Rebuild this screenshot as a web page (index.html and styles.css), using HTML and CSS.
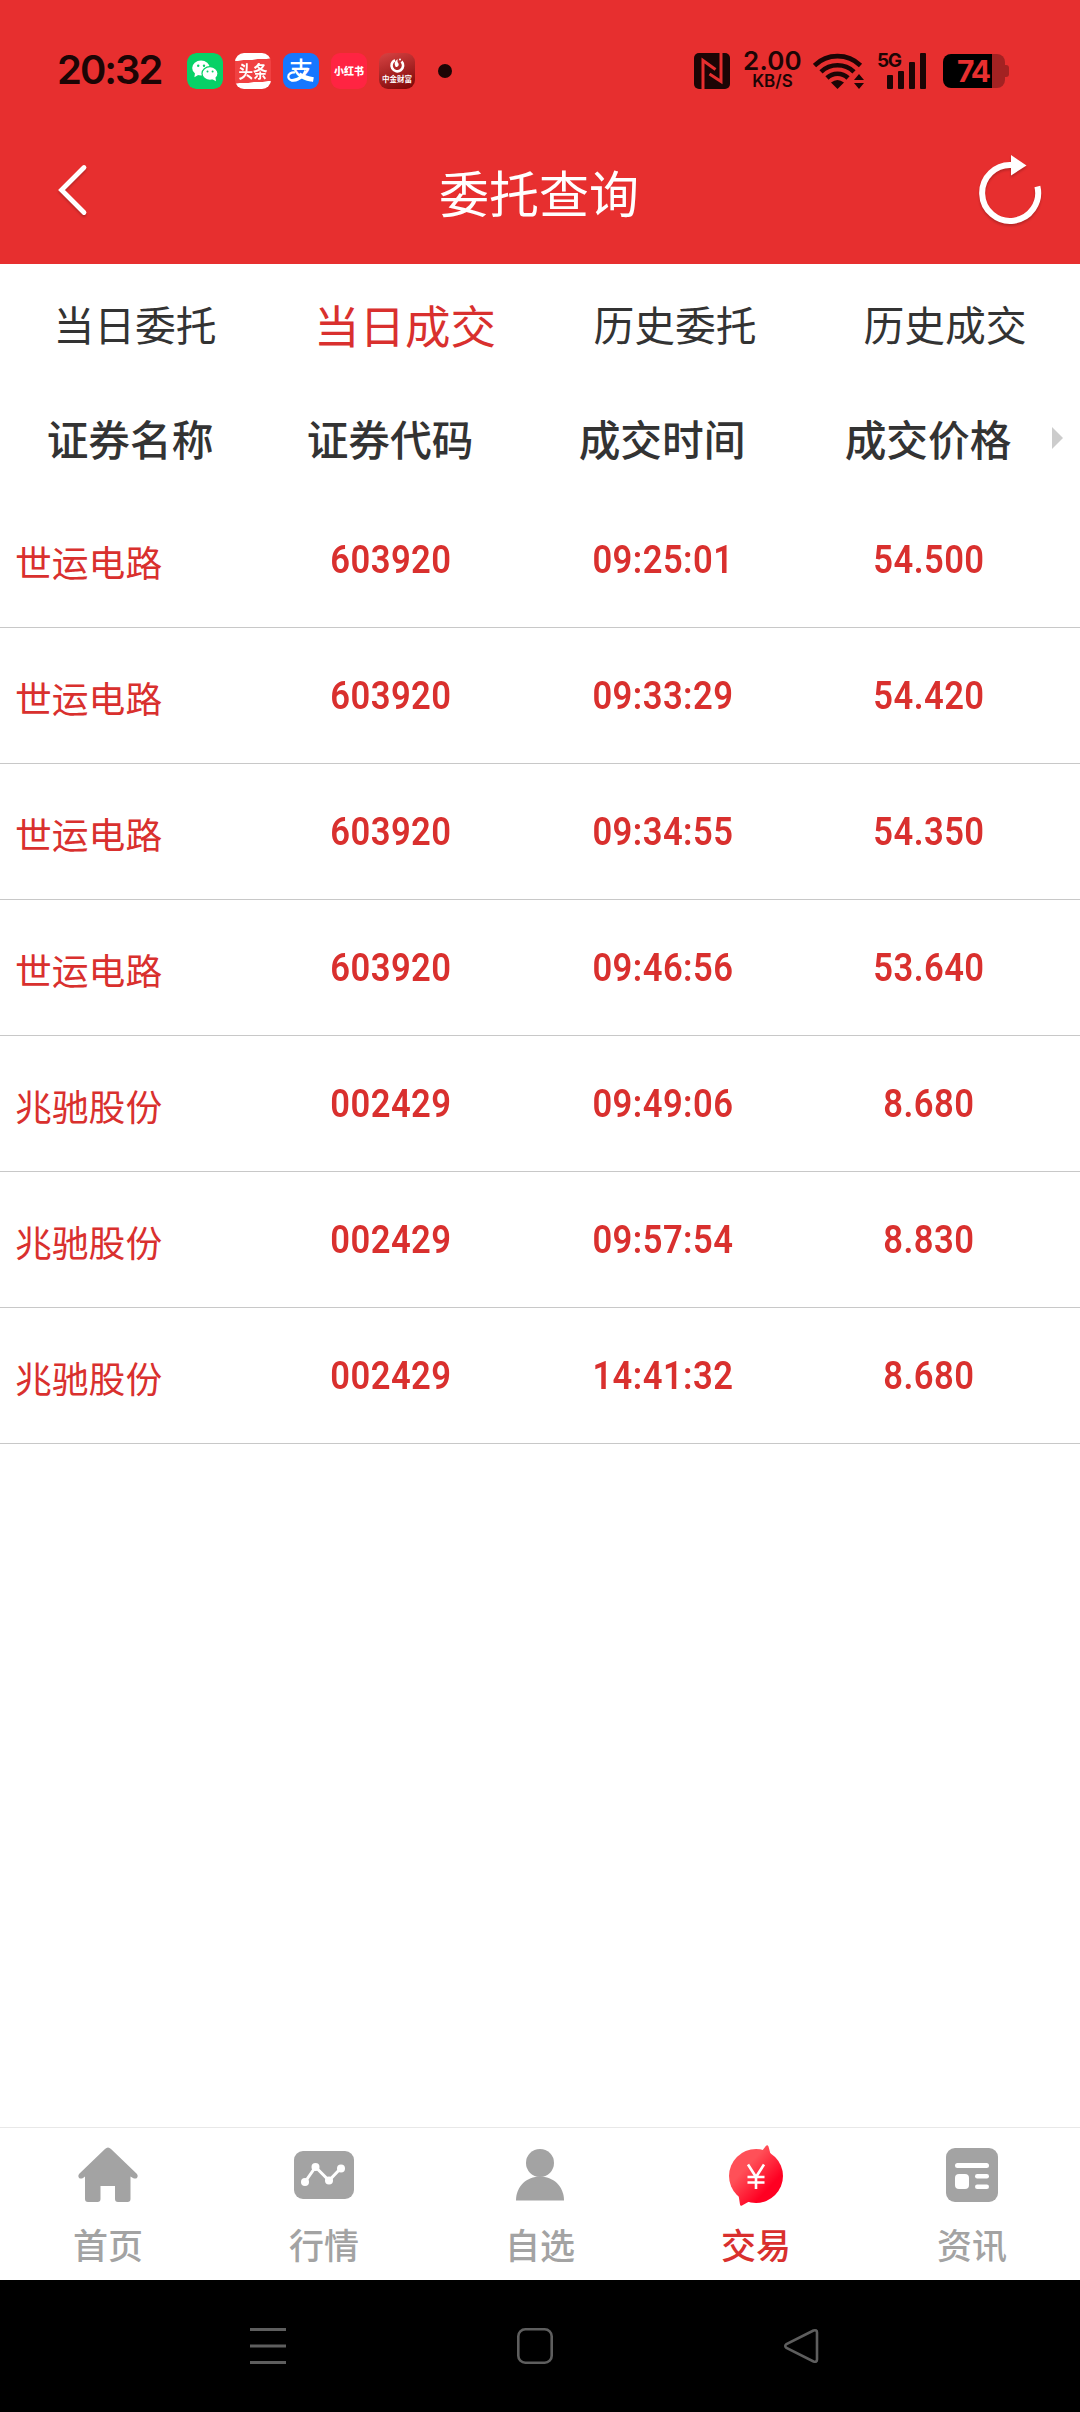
FILE: index.html
```html
<!DOCTYPE html>
<html lang="zh-CN">
<head>
    <meta charset="UTF-8">
    <meta name="viewport" content="width=device-width, initial-scale=1.0">
    <title>委托查询</title>
    <link rel="stylesheet" href="styles.css">
</head>
<body>
    <div class="status-bar">
        <div class="clock">20:32</div>
        <div class="app-icons">
            <svg class="app-icon" viewBox="0 0 36 36">
                <rect width="36" height="36" rx="9" fill="#07d167"/>
                <ellipse cx="14" cy="15" rx="8.8" ry="7.4" fill="#fff"/>
                <path d="M8 20l-.6 4.2 4.2-2.4z" fill="#fff"/>
                <ellipse cx="23" cy="20.5" rx="8" ry="6.8" fill="#fff" stroke="#07d167" stroke-width="1.2"/>
                <path d="M25 26l4 2.2-.6-4z" fill="#fff"/>
                <g fill="#07d167">
                    <circle cx="11.2" cy="12.8" r="1.2"/>
                    <circle cx="17" cy="12.8" r="1.2"/>
                    <circle cx="20.5" cy="18.6" r="1"/>
                    <circle cx="25.6" cy="18.6" r="1"/>
                </g>
            </svg>
            <div class="app-icon app-toutiao"><span>头条</span></div>
            <div class="app-icon app-alipay"><span>支</span>
                <svg viewBox="0 0 36 36"><path d="M12 19.5c-4-.3-7 1.5-6.7 4.5.4 3.6 5.7 4.6 9.7 2.5 3.5-1.8 6-5 7.5-9" fill="none" stroke="#fff" stroke-width="2.2"/><path d="M17 19.5c4.5 2.4 8.5 3.9 13.8 4.8l-.8 4.6c-5-1.3-9-3.6-14-7z" fill="#fff"/></svg>
            </div>
            <div class="app-icon app-xhs"><span>小红书</span></div>
            <div class="app-icon app-cicc">
                <svg viewBox="0 0 36 22"><path d="M16 7.2A5.8 5.8 0 1 0 22.5 8.5" fill="none" stroke="#fff" stroke-width="2.6"/><path d="M18.5 6c-3 2.600-3.600 5-1.800 8 3 .2 4-2.600 1.800-5z" fill="#fff"/><circle cx="21" cy="6.5" r="1" fill="#fff"/></svg>
                <span>中金财富</span>
            </div>
        </div>
        <div class="more-dot"></div>
        <div class="status-right">
            <svg class="nfc" viewBox="0 0 36 36">
                <rect width="36" height="36" rx="5" fill="#1c0505"/>
                <path d="M9 36V7.5L21.500 16.500M27 0v28.500L15.500 21" fill="none" stroke="#e72f2f" stroke-width="3"/>
            </svg>
            <div class="net-speed">
                <span class="speed-num">2.00</span>
                <span class="speed-unit">KB/S</span>
            </div>
            <svg class="wifi" viewBox="0 0 52 36">
                <g fill="none" stroke="#1c0505" stroke-width="4.6">
                    <path d="M1.5 12.5a33 33 0 0 1 46 0"/>
                    <path d="M8 18.8a24 24 0 0 1 33 0"/>
                    <path d="M14 25a15 15 0 0 1 21 0"/>
                </g>
                <path d="M18 29.5q6.5-5 13 0l-6.5 6.5z" fill="#1c0505"/>
                <path d="M41 27l5-6 5 6zM41 30h10l-5 6z" fill="#1c0505"/>
            </svg>
            <div class="signal">
                <span>5G</span>
                <svg viewBox="0 0 50 36" fill="#1c0505">
                    <rect x="10" y="22" width="6" height="14" rx="1"/>
                    <rect x="21" y="18" width="6" height="18" rx="1"/>
                    <rect x="32" y="9" width="6" height="27" rx="1"/>
                    <rect x="43" y="0" width="6" height="36" rx="1"/>
                </svg>
            </div>
            <div class="battery"><div class="battery-body">74</div><div class="battery-cap"></div></div>
        </div>
    </div>

    <header class="title-bar">
        <svg class="back-icon" viewBox="0 0 30 50"><path d="M27 2.5L4.500 25 27 47.500" fill="none" stroke="#fff" stroke-width="4.8" stroke-linecap="round"/></svg>
        <h1>委托查询</h1>
        <svg class="refresh-icon" viewBox="0 0 64 70">
            <path d="M33 8A28 28 0 1 0 58.4 29.5" fill="none" stroke="#fff" stroke-width="6"/>
            <path d="M32-2l15.5 10.5L32 18.5z" fill="#fff"/>
        </svg>
    </header>

    <nav class="tabs">
        <a class="tab">当日委托</a>
        <a class="tab active">当日成交</a>
        <a class="tab">历史委托</a>
        <a class="tab">历史成交</a>
    </nav>

    <main class="deals">
        <div class="deal-head">
            <span>证券名称</span>
            <span>证券代码</span>
            <span>成交时间</span>
            <span>成交价格</span>
            <i class="scroll-arrow"></i>
        </div>
        <div class="deal-row">
            <span class="name">世运电路</span><span class="num">603920</span><span class="num">09:25:01</span><span class="num">54.500</span>
        </div>
        <div class="deal-row">
            <span class="name">世运电路</span><span class="num">603920</span><span class="num">09:33:29</span><span class="num">54.420</span>
        </div>
        <div class="deal-row">
            <span class="name">世运电路</span><span class="num">603920</span><span class="num">09:34:55</span><span class="num">54.350</span>
        </div>
        <div class="deal-row">
            <span class="name">世运电路</span><span class="num">603920</span><span class="num">09:46:56</span><span class="num">53.640</span>
        </div>
        <div class="deal-row">
            <span class="name">兆驰股份</span><span class="num">002429</span><span class="num">09:49:06</span><span class="num">8.680</span>
        </div>
        <div class="deal-row">
            <span class="name">兆驰股份</span><span class="num">002429</span><span class="num">09:57:54</span><span class="num">8.830</span>
        </div>
        <div class="deal-row">
            <span class="name">兆驰股份</span><span class="num">002429</span><span class="num">14:41:32</span><span class="num">8.680</span>
        </div>
    </main>

    <nav class="bottom-nav">
        <a class="nav-item">
            <svg viewBox="0 0 60 60" fill="#a3a3a3"><path d="M27 4q3-3 6 0l26 25q1.500 2 0 4-2 1-4 0l-2.500-1.500V54q0 3-3 3H40q-3 0-3-3V41H22.500v13q0 3-3 3H10q-3 0-3-3V31.500L5 33q-2 1-4 0-1.500-2 0-4z"/></svg>
            <span>首页</span>
        </a>
        <a class="nav-item">
            <svg viewBox="0 0 60 60"><rect y="6" width="60" height="48" rx="9" fill="#a3a3a3"/><path d="M11 37L21.5 22 35 35.5 47 23" fill="none" stroke="#fff" stroke-width="3"/><g fill="#fff"><circle cx="11" cy="37" r="4"/><circle cx="21.5" cy="22" r="4"/><circle cx="35" cy="35.5" r="4"/><circle cx="47" cy="23.5" r="4"/></g></svg>
            <span>行情</span>
        </a>
        <a class="nav-item">
            <svg viewBox="0 0 60 60" fill="#a3a3a3"><circle cx="30" cy="18" r="14"/><path d="M6 55.5C6 41 17 31.5 30 31.5S54 41 54 55.5z"/></svg>
            <span>自选</span>
        </a>
        <a class="nav-item active">
            <svg viewBox="0 0 60 60">
                <defs><linearGradient id="trade" gradientUnits="userSpaceOnUse" x1="14" y1="16" x2="46" y2="46"><stop offset="0.2" stop-color="#ff5058"/><stop offset="0.9" stop-color="#ff0022"/></linearGradient></defs>
                <g fill="url(#trade)">
                    <circle cx="30" cy="31" r="27"/>
                    <path d="M36 6L40 .8Q41.5-.8 42.5 1.5L44.5 9zM24 56L16 60.5Q14.5 61.5 14 59.5L12.5 50z"/>
                </g>
                <path d="M22 19.5l8 12.5 8-12.5M30 31v13M21.5 32h17M21.5 37.5h17" fill="none" stroke="#fff" stroke-width="2.6"/>
            </svg>
            <span>交易</span>
        </a>
        <a class="nav-item">
            <svg viewBox="0 0 60 60"><rect x="4" y="3" width="52" height="54" rx="9" fill="#a3a3a3"/><g fill="#fff"><rect x="13" y="18" width="34" height="5" rx="2.5"/><rect x="13" y="29" width="14" height="15" rx="4"/><rect x="33" y="29" width="14" height="4.5" rx="2.2"/><rect x="33" y="39.5" width="14" height="4.5" rx="2.2"/></g></svg>
            <span>资讯</span>
        </a>
    </nav>

    <div class="system-nav">
        <svg viewBox="0 0 36 36"><path d="M0 1.5h36M0 18h36M0 34.5h36" stroke="#5e5e5e" stroke-width="3"/></svg>
        <svg viewBox="0 0 36 36"><rect x="1.3" y="1.3" width="33.4" height="33.4" rx="7" fill="none" stroke="#5e5e5e" stroke-width="2.6"/></svg>
        <svg viewBox="0 0 36 36"><path d="M30.5 2.5L3.5 16Q1 18 3.5 20l27 13.5q3.500 1 3.500-2V4.500q0-3-3.500-2z" fill="none" stroke="#5e5e5e" stroke-width="2.6"/></svg>
    </div>
</body>
</html>
```
FILE: styles.css
```css
* {
    margin: 0;
    padding: 0;
    box-sizing: border-box;
}

body {
    width: 1080px;
    height: 2412px;
    display: flex;
    flex-direction: column;
    font-family: "Noto Sans CJK SC", sans-serif;
    background: #fff;
    color: #333;
    overflow: hidden;
}

svg {
    display: block;
}

/* phone status bar */
.status-bar {
    height: 142px;
    padding: 0 71px 0 57px;
    display: flex;
    align-items: center;
    background: #e72f2f;
    color: #1c0505;
    font-family: Inter, sans-serif;
}

.clock {
    width: 130px;
    padding-bottom: 2px;
    font-size: 40px;
    font-weight: 600;
    line-height: 36px;
    letter-spacing: -2px;
}

.app-icons {
    display: flex;
    gap: 12px;
}

.app-icon {
    width: 36px;
    height: 36px;
    border-radius: 9px;
    color: #fff;
    font-family: "Noto Sans CJK SC", sans-serif;
    font-weight: 700;
    text-align: center;
    white-space: nowrap;
}

.app-toutiao {
    background: linear-gradient(176deg, #fff 20%, #f04142 21%, #f04142 79%, #fff 80%);
    font-size: 14.5px;
    line-height: 36px;
}

.app-toutiao span {
    display: block;
    transform: scaleY(1.15);
}

.app-alipay {
    position: relative;
    background: #1677ff;
    font-size: 24px;
    font-weight: 500;
    line-height: 32px;
}

.app-alipay svg {
    position: absolute;
    top: 0;
    left: 0;
}

.app-xhs {
    background: #ff2442;
    font-size: 10px;
    font-weight: 900;
    line-height: 36px;
}

.app-cicc {
    background: linear-gradient(160deg, #d84343, #7a0505);
    font-size: 7.5px;
    line-height: 8px;
}

.more-dot {
    width: 14px;
    height: 14px;
    margin-left: 23px;
    border-radius: 50%;
    background: #1c0505;
}

.status-right {
    margin-left: auto;
    display: flex;
    align-items: center;
}

.nfc {
    width: 36px;
    height: 36px;
}

.net-speed {
    width: 57px;
    margin: 0 12px 0 14px;
    display: flex;
    flex-direction: column;
    align-items: center;
    font-weight: 600;
}

.speed-num {
    font-size: 26px;
    line-height: 20px;
    letter-spacing: 0.2px;
}

.speed-unit {
    font-size: 17px;
    line-height: 20px;
}

.wifi {
    width: 52px;
    height: 36px;
}

.signal {
    position: relative;
    width: 50px;
    margin: 0 16px 0 12px;
}

.signal span {
    position: absolute;
    top: -2px;
    left: 0;
    font-size: 19px;
    font-weight: 700;
    line-height: 19px;
    letter-spacing: -1.5px;
}

.battery {
    display: flex;
    align-items: center;
}

.battery-body {
    width: 62px;
    height: 34px;
    padding-left: 14px;
    border-radius: 8px;
    background: linear-gradient(90deg, #000 49px, #a32222 49px);
    color: #e72f2f;
    font-size: 30px;
    font-weight: 700;
    line-height: 35px;
    letter-spacing: -2px;
}

.battery-cap {
    width: 4px;
    height: 12px;
    border-radius: 0 3px 3px 0;
    background: #a32222;
}

/* page title */
.title-bar {
    height: 122px;
    padding: 0 37px 22px 57px;
    display: flex;
    align-items: center;
    justify-content: space-between;
    background: #e72f2f;
    color: #fff;
}

.title-bar h1 {
    padding: 0 0 2px 12px;
    font-size: 50px;
    font-weight: 400;
    line-height: 60px;
}

.back-icon {
    width: 30px;
    height: 50px;
    margin-bottom: 4px;
    overflow: visible;
    filter: drop-shadow(0 2px 1px rgba(0, 0, 0, 0.2));
}

.refresh-icon {
    width: 64px;
    height: 70px;
    overflow: visible;
    filter: drop-shadow(0 2px 1px rgba(0, 0, 0, 0.2));
}

/* tabs */
.tabs {
    height: 124px;
    padding-bottom: 4px;
    display: grid;
    grid-template-columns: repeat(4, 1fr);
    align-items: center;
    text-align: center;
}

.tab {
    font-size: 40.8px;
    line-height: 60px;
}

.tab.active {
    color: #d9302e;
    font-size: 45.5px;
}

/* deal list */
.deal-head,
.deal-row {
    display: grid;
    grid-template-columns: 260px 260px 284px 248px 28px;
    align-items: center;
    text-align: center;
}

.deal-head {
    height: 104px;
    padding-bottom: 4px;
    font-size: 41.7px;
    font-weight: 500;
}

.scroll-arrow {
    width: 11px;
    border: 11px solid transparent;
    border-left-color: #ccc;
    border-right: 0;
}

.deal-row {
    height: 136px;
    border-bottom: 1px solid #c8c8c8;
    color: #d9302e;
}

.name {
    padding: 2px 0 0 15px;
    font-size: 36.8px;
    line-height: 50px;
    text-align: left;
}

.num {
    padding-left: 2px;
    font-family: Roboto, sans-serif;
    font-size: 38px;
    font-weight: 600;
    line-height: 50px;
    letter-spacing: 0.5px;
    transform: scaleX(0.91);
}

/* bottom navigation */
.bottom-nav {
    height: 153px;
    margin-top: auto;
    padding-top: 17px;
    display: grid;
    grid-template-columns: repeat(5, 1fr);
    border-top: 1px solid #e8e8e8;
}

.nav-item {
    display: flex;
    flex-direction: column;
    align-items: center;
    color: #a3a3a3;
    font-size: 35px;
    font-weight: 500;
    line-height: 50px;
}

.nav-item svg {
    width: 60px;
    height: 60px;
    margin-bottom: 14px;
    overflow: visible;
}

.nav-item.active {
    color: #d9302e;
}

/* android buttons */
.system-nav {
    height: 132px;
    padding: 0 261px 0 250px;
    display: flex;
    align-items: center;
    justify-content: space-between;
    background: #000;
}

.system-nav svg {
    width: 36px;
    height: 36px;
}
```
